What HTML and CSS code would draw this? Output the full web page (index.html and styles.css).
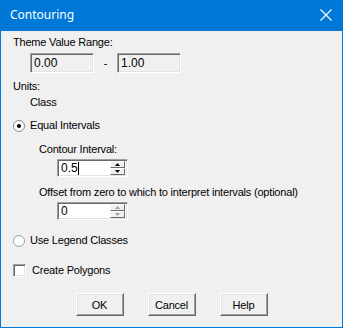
FILE: index.html
```html
<!DOCTYPE html>
<html>
<head>
<meta charset="utf-8">
<link rel="stylesheet" href="styles.css">
</head>
<body>
<div class="window">
  <div class="titlebar">
    <span class="title">Contouring</span>
    <svg class="close" width="12" height="12" viewBox="0 0 12 12"><path d="M0.5 0.5 L11.5 11.5 M11.5 0.5 L0.5 11.5" stroke="#fff" stroke-width="1.1" fill="none"/></svg>
  </div>
  <div class="content">
    <div class="label l-theme">Theme Value Range:</div>
    <div class="range-row">
      <div class="edit disabled">0.00</div>
      <span class="dash">-</span>
      <div class="edit disabled">1.00</div>
    </div>
    <div class="label l-units">Units:</div>
    <div class="label l-class">Class</div>
    <div class="option o-equal">
      <svg class="radio" width="12" height="12" viewBox="0 0 12 12">
        <circle cx="6" cy="6" r="5.5" fill="#fff" stroke="#8a8a8a"/>
        <circle cx="6" cy="6" r="2" fill="#000"/>
      </svg>
      <span>Equal Intervals</span>
    </div>
    <div class="sub">
      <div class="label l-contour">Contour Interval:</div>
      <div class="spin active">
        <span class="spin-text">0.5<span class="caret"></span></span>
        <div class="spin-btns">
          <div class="sbtn"><svg width="5" height="3" viewBox="0 0 5 3"><path d="M2.5 0 L5 3 L0 3 Z" fill="#000"/></svg></div>
          <div class="sbtn"><svg width="5" height="3" viewBox="0 0 5 3"><path d="M0 0 L5 0 L2.5 3 Z" fill="#000"/></svg></div>
        </div>
      </div>
      <div class="label l-offset">Offset from zero to which to interpret intervals (optional)</div>
      <div class="spin s-offset">
        <span class="spin-text">0</span>
        <div class="spin-btns">
          <div class="sbtn"><svg width="5" height="3" viewBox="0 0 5 3"><path d="M2.5 0 L5 3 L0 3 Z" fill="#a0a0a0"/></svg></div>
          <div class="sbtn"><svg width="5" height="3" viewBox="0 0 5 3"><path d="M0 0 L5 0 L2.5 3 Z" fill="#a0a0a0"/></svg></div>
        </div>
      </div>
    </div>
    <div class="option o-legend">
      <svg class="radio" width="12" height="12" viewBox="0 0 12 12">
        <circle cx="6" cy="6" r="5.5" fill="#fff" stroke="#a0a0a0"/>
      </svg>
      <span>Use Legend Classes</span>
    </div>
    <div class="option o-check">
      <span class="checkbox"></span>
      <span>Create Polygons</span>
    </div>
    <div class="buttons">
      <button class="btn">OK</button>
      <button class="btn">Cancel</button>
      <button class="btn">Help</button>
    </div>
  </div>
</div>
</body>
</html>
```
FILE: styles.css
```css
html, body {
  margin: 0;
  padding: 0;
  background: #f0f0f0;
}
.window {
  width: 343px;
  height: 328px;
  box-sizing: border-box;
  border: 1px solid #0078d7;
  border-top: none;
  background: #f0f0f0;
  font-family: "Liberation Sans", Arial, sans-serif;
  font-size: 11px;
  line-height: 13px;
  letter-spacing: -0.2px;
  color: #000;
  overflow: hidden;
}
.titlebar {
  height: 31px;
  margin: 0 -1px;
  background: #0078d7;
  display: flex;
  align-items: center;
  justify-content: space-between;
  padding: 0 10px 0 10px;
}
.title {
  color: #fff;
  font-family: "Noto Sans", "Open Sans", sans-serif;
  font-size: 12px;
  line-height: 16px;
  letter-spacing: 0;
  padding-bottom: 2px;
}
.close {
  display: block;
  margin-right: 1px;
  margin-bottom: 2px;
}
.content {
  padding: 5px 0 0 12px;
}
.label {
  height: 13px;
  white-space: nowrap;
}
.range-row {
  display: flex;
  align-items: center;
  margin-top: 4px;
  padding-left: 17px;
}
.edit {
  width: 64px;
  height: 20px;
  box-sizing: border-box;
  border-style: solid;
  border-width: 1px;
  border-color: #a0a0a0 #ffffff #ffffff #a0a0a0;
  box-shadow: inset 1px 1px 0 #696969, inset -1px -1px 0 #e3e3e3;
  padding: 2px 0 0 3px;
  line-height: 14px;
  font-size: 12px;
  letter-spacing: 0;
}
.edit.disabled {
  background: #f0f0f0;
}
.dash {
  width: 23px;
  text-align: center;
}
.l-units { margin-top: 7px; }
.l-class { margin-top: 3px; padding-left: 17px; }
.option {
  display: flex;
  align-items: center;
  height: 13px;
  white-space: nowrap;
}
.radio {
  display: block;
  flex: none;
  margin-right: 5px;
}
.o-equal { margin-top: 10px; }
.sub {
  padding-left: 26px;
}
.l-contour { margin-top: 11px; }
.spin {
  display: flex;
  align-items: center;
  justify-content: space-between;
  width: 71px;
  height: 18px;
  margin-top: 3px;
  margin-left: 18px;
  box-sizing: border-box;
  border-style: solid;
  border-width: 1px;
  border-color: #a0a0a0 #ffffff #ffffff #a0a0a0;
  box-shadow: inset 1px 1px 0 #696969, inset -1px -1px 0 #e3e3e3;
  background: #fff;
  padding: 1px 2px 1px 2px;
}
.spin-text {
  display: flex;
  align-items: center;
  padding-left: 1px;
  font-size: 12px;
  letter-spacing: 0;
}
.caret {
  display: inline-block;
  width: 1px;
  height: 13px;
  background: #000;
  margin-left: 0;
}
.spin-btns {
  display: flex;
  flex-direction: column;
  width: 15px;
  height: 14px;
}
.sbtn {
  flex: 1;
  box-sizing: border-box;
  display: flex;
  align-items: center;
  justify-content: center;
  background: #f0f0f0;
  border-style: solid;
  border-width: 1px;
  border-color: #ffffff #696969 #696969 #ffffff;
}
.sbtn svg { display: block; }
.l-offset { margin-top: 9px; }
.s-offset { margin-top: 3px; }
.o-legend { margin-top: 14px; }
.o-check { margin-top: 17px; }
.checkbox {
  width: 13px;
  height: 13px;
  box-sizing: border-box;
  border-style: solid;
  border-width: 1px;
  border-color: #a0a0a0 #ffffff #ffffff #a0a0a0;
  box-shadow: inset 1px 1px 0 #696969, inset -1px -1px 0 #e3e3e3;
  background: #fff;
  margin-right: 6px;
  flex: none;
}
.buttons {
  display: flex;
  justify-content: center;
  gap: 24px;
  margin-top: 16px;
  margin-left: -12px;
}
.btn {
  width: 48px;
  height: 23px;
  box-sizing: border-box;
  padding: 0;
  margin: 0;
  font-family: "Liberation Sans", Arial, sans-serif;
  font-size: 11px;
  letter-spacing: -0.2px;
  color: #000;
  background: #f0f0f0;
  border-style: solid;
  border-width: 1px;
  border-color: #ffffff #696969 #696969 #ffffff;
  box-shadow: inset -1px -1px 0 #a0a0a0, inset 1px 1px 0 #e3e3e3;
}
```
